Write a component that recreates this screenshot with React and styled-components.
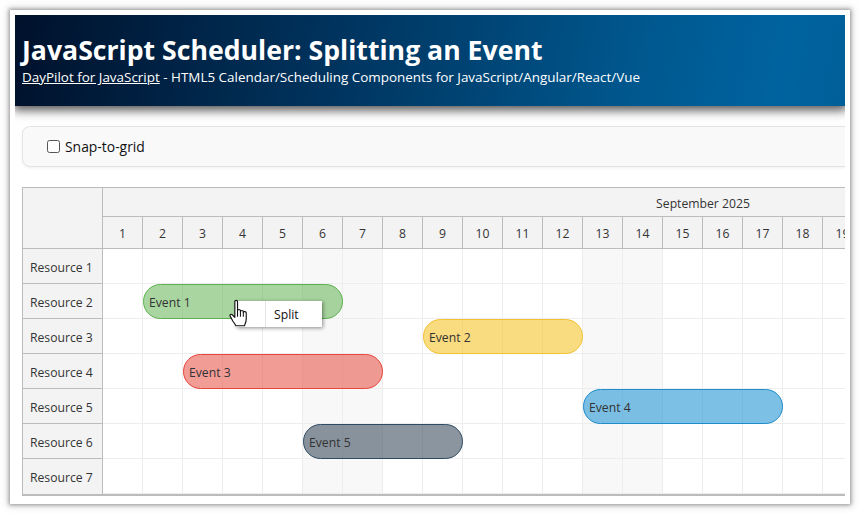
import React from "react";
import styled, { createGlobalStyle } from "styled-components";

const Global = createGlobalStyle`
  html, body { margin: 0; padding: 0; background: #fff; overflow: hidden; }
  body { font-family: "Open Sans", "Noto Sans", "Liberation Sans", sans-serif; }
`;
const Frame = styled.div`
  width: 840px; height: 494px; margin: 10px; box-sizing: border-box; padding: 5px;
  background: #fff; box-shadow: 0 0 4px 1px rgba(0,0,0,.38), 0 0 8px 3px rgba(0,0,0,.1);
`;
const Content = styled.div`
  height: 100%; overflow: hidden;
`;
const Header = styled.header`
  height: 91px; box-sizing: border-box; padding: 17px 7px 0; color: #fff;
  background: linear-gradient(100deg, #00112b 0%, #003560 40%, #00588f 75%, #00639f 92%, #005f98 100%);
  box-shadow: 0 2px 10px 2px rgba(0,0,0,.7); position: relative;
`;
const Title = styled.h1`
  margin: 0; font-size: 26.65px; line-height: 36px; font-weight: 700; white-space: nowrap;
`;
const Sub = styled.div`
  font-size: 13.45px; line-height: 18px; white-space: nowrap;
  a { color: #fff; text-decoration: underline; }
`;
const Main = styled.main`
  padding: 20px 0 0 7px; width: 1300px;
`;
const Toolbar = styled.div`
  height: 41px; box-sizing: border-box; width: 900px; display: flex; align-items: center; gap: 5px; padding-left: 24px;
  background: #f9f9f9; border: 1px solid #e4e4e4; border-radius: 8px; box-shadow: 0 1px 3px rgba(0,0,0,.06);
  font-size: 13.9px; color: #111;
`;
const Box = styled.span`
  width: 13px; height: 13px; box-sizing: border-box; border: 1px solid #555; border-radius: 2.5px; background: #fff;
`;
const Sched = styled.div`
  margin-top: 20px; width: 1281px; display: grid; grid-template-columns: 80px 1200px; position: relative;
  border: solid #bcbcbc; border-width: 1px 0 2px 1px; color: #333; font-size: 12.2px;
`;
const Corner = styled.div`
  background: #f3f3f3; border-right: 1px solid #bcbcbc; border-bottom: 1px solid #bcbcbc; height: 60px;
`;
const TimeHead = styled.div`
  background: #f3f3f3; border-bottom: 1px solid #bcbcbc; height: 60px; overflow: hidden; box-sizing: content-box;
`;
const Month = styled.div`
  height: 29px; display: flex; align-items: center; justify-content: center;
  box-sizing: border-box; border-bottom: 1px solid #bcbcbc; padding-top: 2px;
`;
const Days = styled.div`
  display: flex; height: 31px;
`;
const Day = styled.div`
  width: 40px; flex: none; box-sizing: border-box; border-right: 1px solid #bcbcbc; padding-top: 2px;
  display: flex; align-items: center; justify-content: center;
`;
const Names = styled.div`
  display: flex; flex-direction: column;
`;
const Name = styled.div`
  height: 35px; box-sizing: border-box; padding: 3px 0 0 7px; display: flex; align-items: center;
  background: #f3f3f3; border-right: 1px solid #bcbcbc; border-bottom: 1px solid #bcbcbc;
  &:last-child { border-bottom: 0; padding: 2px 0 1px 7px; }
`;
const Grid = styled.div`
  position: relative;
  display: flex; flex-direction: column;
`;
const Row = styled.div`
  display: flex; height: 35px; box-sizing: border-box; border-bottom: 1px solid #ededed;
  &:last-of-type { border-bottom: 0; }
`;
const Cell = styled.div`
  width: 40px; flex: none; box-sizing: border-box; border-right: 1px solid #ededed;
  background: ${p => (p.$weekend ? "#f8f8f8" : "#fff")};
`;
const Event = styled.div`
  position: absolute; height: 35px; box-sizing: border-box; border-radius: 17.5px; padding: 2px 5px 0;
  border: 1px solid ${p => p.$line}; background: ${p => p.$fill};
  display: flex; align-items: center; color: #333;
  white-space: nowrap;
`;
const Menu = styled.div`
  position: absolute; left: 133px; top: 52px; width: 86px; height: 26px; box-sizing: border-box; background: #fff;
  box-shadow: 1px 1px 4px rgba(0,0,0,.45); display: flex; align-items: center; padding-left: 38px;
  color: #111; font-size: 12.2px;
  &::before { content: ""; position: absolute; left: 29px; top: 0; bottom: 0; width: 1px; background: #e4e4e4; }
`;
const Cursor = styled.svg`
  position: absolute; left: 126px; top: 50px; width: 21px; height: 28px;
`;

const days = Array.from({ length: 19 }, (_, i) => i + 1);
const cells = Array.from({ length: 20 }, (_, i) => i + 1);
const resources = [1, 2, 3, 4, 5, 6, 7];
const events = [
  { name: "Event 1", row: 1, start: 1, len: 5, fill: "rgba(106,185,92,.58)", line: "#5cb14d" },
  { name: "Event 2", row: 2, start: 8, len: 4, fill: "rgba(246,200,60,.65)", line: "#f1c232" },
  { name: "Event 3", row: 3, start: 2, len: 5, fill: "rgba(234,90,80,.6)", line: "#e8453c" },
  { name: "Event 4", row: 4, start: 12, len: 5, fill: "rgba(47,155,214,.63)", line: "#1f8dcb" },
  { name: "Event 5", row: 5, start: 5, len: 4, fill: "rgba(62,78,95,.6)", line: "#2f4a63" },
];
const isWeekend = d => d % 7 === 6 || d % 7 === 0;

export default function App() {
  return (
    <>
      <Global />
      <Frame>
        <Content>
          <Header>
            <Title>JavaScript Scheduler: Splitting an Event</Title>
            <Sub><a href="#top">DayPilot for JavaScript</a> - HTML5 Calendar/Scheduling Components for JavaScript/Angular/React/Vue</Sub>
          </Header>
          <Main>
            <Toolbar><Box />Snap-to-grid</Toolbar>
            <Sched>
              <Corner />
              <TimeHead>
                <Month>September 2025</Month>
                <Days>{days.map(d => <Day key={d}>{d}</Day>)}</Days>
              </TimeHead>
              <Names>{resources.map(r => <Name key={r}>Resource {r}</Name>)}</Names>
              <Grid>
                {resources.map(r => (
                  <Row key={r}>{cells.map(d => <Cell key={d} $weekend={isWeekend(d)} />)}</Row>
                ))}
                {events.map(e => (
                  <Event key={e.name} $fill={e.fill} $line={e.line}
                    style={{ left: e.start * 40, top: e.row * 35, width: e.len * 40 }}>{e.name}</Event>
                ))}
                <Menu>Split</Menu>
                <Cursor viewBox="0 0 20 27">
                  <path d="M5.500 2.500c0-1.500 2.600-1.500 2.600 0v8.500c0-1.200 2.800-1.200 2.800 0v1c0-1.200 2.800-1.200 2.800 0v1c0-1.200 2.800-1.200 2.800.3v6c0 3-1.300 5-1.700 6.500H6.500c-.7-1.700-2-3-3-4.600L1 16.500c-.7-1.400 1-2.400 2-1.300l2.500 2.500z" fill="#fff" stroke="#111" strokeWidth="1.100" strokeLinejoin="round" />
                  <path d="M8.100 11v6M10.900 12v5M13.700 13v4" stroke="#111" strokeWidth="1" fill="none" />
                </Cursor>
              </Grid>
            </Sched>
          </Main>
        </Content>
      </Frame>
    </>
  );
}
